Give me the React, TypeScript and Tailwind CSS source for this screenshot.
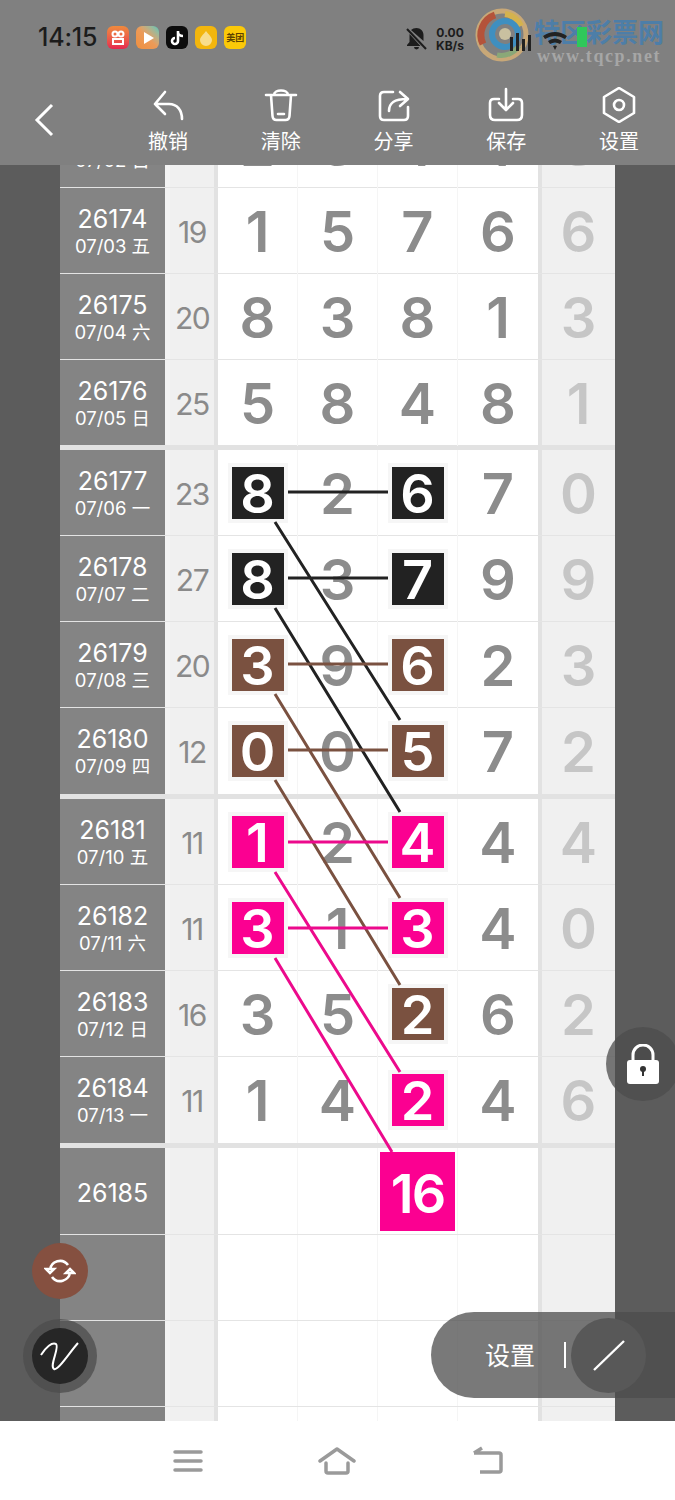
const FONT = "font-['Inter','Noto_Sans_CJK_SC',sans-serif]";

type Tone = "black" | "brown" | "pink";
type Row = {
  id: string;
  date?: string;
  sum?: string;
  nums?: string[];
  last?: string;
  marks?: Record<number, Tone>;
};

const toneClass: Record<Tone, string> = {
  black: "bg-[#222222]",
  brown: "bg-[#7a5140]",
  pink: "bg-[#fb0091]",
};

const groups: Row[][] = [
  [
    { id: "26173", date: "07/02 日", sum: "15", nums: ["2", "3", "1", "1"], last: "3" },
    { id: "26174", date: "07/03 五", sum: "19", nums: ["1", "5", "7", "6"], last: "6" },
    { id: "26175", date: "07/04 六", sum: "20", nums: ["8", "3", "8", "1"], last: "3" },
    { id: "26176", date: "07/05 日", sum: "25", nums: ["5", "8", "4", "8"], last: "1" },
  ],
  [
    { id: "26177", date: "07/06 一", sum: "23", nums: ["8", "2", "6", "7"], last: "0", marks: { 0: "black", 2: "black" } },
    { id: "26178", date: "07/07 二", sum: "27", nums: ["8", "3", "7", "9"], last: "9", marks: { 0: "black", 2: "black" } },
    { id: "26179", date: "07/08 三", sum: "20", nums: ["3", "9", "6", "2"], last: "3", marks: { 0: "brown", 2: "brown" } },
    { id: "26180", date: "07/09 四", sum: "12", nums: ["0", "0", "5", "7"], last: "2", marks: { 0: "brown", 2: "brown" } },
  ],
  [
    { id: "26181", date: "07/10 五", sum: "11", nums: ["1", "2", "4", "4"], last: "4", marks: { 0: "pink", 2: "pink" } },
    { id: "26182", date: "07/11 六", sum: "11", nums: ["3", "1", "3", "4"], last: "0", marks: { 0: "pink", 2: "pink" } },
    { id: "26183", date: "07/12 日", sum: "16", nums: ["3", "5", "2", "6"], last: "2", marks: { 2: "brown" } },
    { id: "26184", date: "07/13 一", sum: "11", nums: ["1", "4", "2", "4"], last: "6", marks: { 2: "pink" } },
  ],
];

function TableRow({ row, thick, height }: { row: Row; thick?: boolean; height: string }) {
  return (
    <div className={`flex ${height} ${thick ? "border-b-[5px] border-[#e2e2e2]" : "border-b border-[#e4e4e4]"}`}>
      <div className={`flex w-[105px] shrink-0 flex-col items-center justify-center bg-[#848484] text-white ${row.date ? "" : "pt-[3px]"}`}>
        <span className="text-[25px] leading-[30px]">{row.id}</span>
        {row.date && <span className="text-[18.5px] leading-[24px]">{row.date}</span>}
      </div>
      <div className="w-[5px] shrink-0 bg-[#f4f4f4]" />
      <div className="flex w-[44px] shrink-0 items-center justify-center bg-[#f0f0f0] pt-[3px] text-[30px] tracking-[-1.5px] text-[#8a8a8a]">
        {row.sum}
      </div>
      <div className="w-[4px] shrink-0 bg-[#e2e2e2]" />
      <div className="grid w-[320px] shrink-0 grid-cols-4 bg-white">
        {[0, 1, 2, 3].map((i) => {
          const tone = row.marks?.[i];
          return (
            <div key={i} className="flex items-center justify-center border-r border-[#f5f5f5] last:border-r-0">
              {row.nums &&
                (tone ? (
                  <div className={`z-10 flex h-[52px] w-[52px] items-center justify-center text-[54px] font-semibold text-white shadow-[0_0_0_4px_#f6f6f6] ${toneClass[tone]}`}>
                    {row.nums[i]}
                  </div>
                ) : (
                  <span className="pt-[2px] text-[56px] font-semibold text-[#8c8c8c]">{row.nums[i]}</span>
                ))}
            </div>
          );
        })}
      </div>
      <div className="w-[4px] shrink-0 bg-[#e2e2e2]" />
      <div className="flex w-[73px] shrink-0 items-center justify-center bg-[#f0f0f0] pt-[2px] text-[56px] font-semibold text-[#c6c6c6]">
        {row.last}
      </div>
    </div>
  );
}

// coordinates are relative to the table: page x - 60, page y - 102
function Lines() {
  return (
    <svg className="pointer-events-none absolute left-0 top-0 z-20" width="555" height="1256" fill="none" strokeWidth="3">
      <path d="M228 390H328M228 476H328M215 420L340 618M215 506L340 710" stroke="#222222" />
      <path d="M228 562H328M228 648H328M215 592L340 796M215 678L340 883" stroke="#7a5140" />
      <path d="M228 740H328M228 826H328M215 770L340 970M215 856L332 1050" stroke="#ec0a8c" />
    </svg>
  );
}

const tools = [
  { label: "撤销", d: "M5 17L15 5M5 17l10 10M5 17h14c8 0 13 6 13 15" },
  { label: "清除", d: "M3 8h30M11 8c0-6 14-6 14 0M8 8l1.5 21q.3 4 4 4h9q3.7 0 4-4L28 8M15 27h6" },
  { label: "分享", d: "M17 5H8q-4 0-4 4v20q0 4 4 4h20q4 0 4-4v-9M13 24c0-8 5-12 18-12M24 5l8 7-8 7" },
  { label: "保存", d: "M11 12H6q-4 0-4 4v12q0 5 5 5h22q5 0 5-5V16q0-4-4-4h-5M18 2v20M11 16l7 7 7-7" },
  { label: "设置", d: "M18 1l15 9v16l-15 9-15-9V10zM18 13a5 5 0 1 0 0 10 5 5 0 0 0 0-10z" },
];

function AppIcons() {
  return (
    <div className="ml-[10px] flex gap-[7px]">
      <div className="flex h-[23px] w-[22px] items-center justify-center rounded-[6px] bg-gradient-to-b from-[#ef8a3c] to-[#e5254f]">
        <svg width="14" height="16" viewBox="0 0 14 16" fill="none" stroke="white" strokeWidth="2">
          <circle cx="4" cy="4" r="2.5" />
          <circle cx="10" cy="4" r="2.5" />
          <path d="M2 9h10v5H2z" />
        </svg>
      </div>
      <div className="flex h-[23px] w-[23px] items-center justify-center rounded-[6px] bg-gradient-to-tr from-[#ee8f3e] via-[#ec9a58] to-[#45c5bb]">
        <svg width="14" height="14" viewBox="0 0 14 14" fill="white">
          <path d="M3 1l10 6-10 6z" />
        </svg>
      </div>
      <div className="flex h-[23px] w-[22px] items-center justify-center rounded-[6px] bg-[#0c0c0c]">
        <svg width="14" height="16" viewBox="0 0 14 16" fill="none" stroke="white" strokeWidth="2.6">
          <path d="M8 1v10a3 3 0 1 1-3-3M8 2c0 2 2 4 5 4" />
        </svg>
      </div>
      <div className="flex h-[23px] w-[22px] items-center justify-center rounded-[6px] bg-[#f3b60d]">
        <svg width="14" height="16" viewBox="0 0 14 16" fill="#f8dd8c">
          <path d="M7 1c3 4 6 6 6 9a6 6 0 0 1-12 0c0-3 3-5 6-9z" />
        </svg>
      </div>
      <div className="flex h-[23px] w-[22px] items-center justify-center rounded-[6px] bg-[#fbc908] text-[9px] font-bold text-[#5d4300]">
        美团
      </div>
    </div>
  );
}

function Watermark() {
  return (
    <div className="absolute left-[475px] top-[8px] flex items-start">
      <svg width="54" height="54" viewBox="0 0 54 54" fill="none">
        <circle cx="27" cy="27" r="24" stroke="#c8a878" strokeWidth="5" />
        <path d="M8 36A21 21 0 0 1 20 7" stroke="#b4533a" strokeWidth="7" />
        <path d="M46 18A21 21 0 0 0 30 6" stroke="#d4b24e" strokeWidth="6" />
        <path d="M44 38A21 21 0 0 1 22 47" stroke="#8aa878" strokeWidth="5" />
        <circle cx="30" cy="26" r="13" stroke="#3f8fc0" strokeWidth="6" />
        <circle cx="30" cy="26" r="6" fill="#c9c0a0" />
      </svg>
      <div className="ml-[5px] flex flex-col items-center">
        <span className="pt-[9px] text-[26px] font-bold leading-[32px] text-[#4d7ea8]">特区彩票网</span>
        <span className="mt-[-1px] whitespace-nowrap font-['Liberation_Serif',serif] text-[18px] font-bold leading-[16px] tracking-[1.6px] text-[#a6a6a6]">www.tqcp.net</span>
      </div>
      <svg className="absolute left-[35px] top-[19px]" width="80" height="28" viewBox="0 0 80 28" fill="#222222">
        <path d="M0 10h3v14H0zM6 6h3v18H6zM12 12h3v12h-3zM18 8h3v16h-3z" />
        <path d="M33 9q12-8 24 0l-2 3q-10-6-20 0zM38 14q7-5 14 0l-2 3q-5-3-10 0zM43 19q2-1 4 0l-2 4z" />
        <rect x="67" y="0" width="10" height="20" fill="#2fc85a" />
      </svg>
    </div>
  );
}

export default function App() {
  return (
    <div className={`relative flex h-[1500px] w-[675px] flex-col overflow-hidden bg-white ${FONT}`}>
      <header className="relative z-30 h-[165px] shrink-0 bg-[#808080]">
        <div className="flex h-[75px] items-center pl-[38px]">
          <span className="text-[25px] font-medium tracking-[-0.2px] text-[#1c1c1c]">14:15</span>
          <AppIcons />
        </div>
        <div className="absolute left-[405px] top-[26px] flex items-center gap-[8px]">
          <svg width="23" height="24" viewBox="0 0 23 24" fill="#1c1c1c">
            <path d="M11.5 1c4 0 7 3 7 7v6L6 3q2-2 5.500-2zM4.500 7l11 12H2v-1l2.500-3zM9 20h5a2.500 2.500 0 0 1-5 0z" />
            <path d="M2 2l19 20" stroke="#1c1c1c" strokeWidth="2" />
          </svg>
          <div className="flex flex-col items-center text-[12px] font-bold leading-[13px] text-[#1c1c1c]">
            <span>0.00</span>
            <span>KB/s</span>
          </div>
        </div>
        <Watermark />
        <div className="flex items-start">
          <svg className="ml-[32px] mt-[27px]" width="24" height="36" viewBox="0 0 24 36" fill="none" stroke="white" strokeWidth="3">
            <path d="M20 3L5 18l15 15" />
          </svg>
          <div className="ml-[93px] mt-[12px] flex gap-[74.750px]">
            {tools.map((t) => (
              <div key={t.label} className="flex w-[38px] flex-col items-center">
                <svg width="36" height="36" viewBox="0 0 36 36" fill="none" stroke="white" strokeWidth="2.6" strokeLinejoin="round" strokeLinecap="round">
                  <path d={t.d} />
                </svg>
                <span className="mt-[6px] whitespace-nowrap text-[20px] leading-[26px] text-white">{t.label}</span>
              </div>
            ))}
          </div>
        </div>
      </header>

      <main className="relative flex h-[1256px] shrink-0 overflow-hidden bg-[#5c5c5c]">
        <div className="w-[60px] shrink-0" />
        <div className="relative mt-[-63px] w-[555px] shrink-0">
          {groups.map((group, g) =>
            group.map((row, i) => {
              const thick = i === group.length - 1;
              const height = !thick ? "h-[86px]" : g === 0 ? "h-[90px]" : "h-[91px]";
              return <TableRow key={row.id} row={row} thick={thick} height={height} />;
            }),
          )}
          <TableRow row={{ id: "26185" }} height="h-[87px]" />
          <TableRow row={{ id: "" }} height="h-[86px]" />
          <TableRow row={{ id: "" }} height="h-[86px]" />
          <TableRow row={{ id: "" }} height="h-[86px]" />
          <Lines />
          <div className="absolute left-[320px] top-[1050px] z-30 flex h-[79px] w-[75px] items-center justify-center bg-[#fb0091] pt-[3px] text-[54px] font-semibold tracking-[-2px] text-white">
            16
          </div>
        </div>
        <div className="w-[60px] shrink-0" />
      </main>

      <nav className="flex h-[79px] shrink-0 items-center pl-[172px]">
        <svg width="32" height="24" viewBox="0 0 32 24" stroke="#9a9a9a" strokeWidth="3.5" strokeLinecap="round">
          <path d="M3 3h26M3 12h26M3 21h26" />
        </svg>
        <svg className="ml-[114px]" width="38" height="30" viewBox="0 0 38 30" fill="none" stroke="#9a9a9a" strokeWidth="3.5" strokeLinecap="round" strokeLinejoin="round">
          <path d="M2 15L19 3l17 12M8 17v8q0 2 2 2h18q2 0 2-2v-8" />
        </svg>
        <svg className="ml-[115px]" width="34" height="30" viewBox="0 0 34 30" fill="none" stroke="#9a9a9a" strokeWidth="3.5" strokeLinejoin="round">
          <path d="M3 7h25q2 0 2 2v15q0 2-2 2H9M11 2L3 7" />
        </svg>
      </nav>

      <button className="absolute left-[32px] top-[1243px] z-40 flex h-[56px] w-[56px] items-center justify-center rounded-full bg-[#855040]">
        <svg width="32" height="32" viewBox="0 0 32 32" fill="none" stroke="white" strokeWidth="2.6">
          <path d="M6 15a10 10 0 0 1 18-5M26 17a10 10 0 0 1-18 5M2 14h8l-4 4zM30 18h-8l4-4z" />
        </svg>
      </button>
      <div className="absolute left-[23px] top-[1319px] z-40 flex h-[74px] w-[74px] items-center justify-center rounded-full bg-[#4c4c4c]/75">
        <div className="flex h-[56px] w-[56px] items-center justify-center rounded-full bg-[#262626]">
          <svg width="44" height="36" viewBox="0 0 44 36" fill="none" stroke="white" strokeWidth="2">
            <path d="M3 17C8 9 14 4 18 6c4 3-7 22-2 25 4 2 15-16 24-26" />
          </svg>
        </div>
      </div>
      <div className="absolute left-[606px] top-[1027px] z-40 flex h-[74px] w-[74px] items-center justify-center rounded-full bg-[#4c4c4c]/75">
        <svg width="34" height="40" viewBox="0 0 34 40">
          <path d="M7 18v-7a10 10 0 0 1 20 0v7" fill="#4c4c4c" stroke="white" strokeWidth="3" />
          <rect x="1" y="16" width="32" height="24" rx="3" fill="white" />
          <circle cx="17" cy="25" r="3" fill="#333" />
          <path d="M16 26h2v6h-2z" fill="#333" />
        </svg>
      </div>
      <div className="absolute left-[431px] top-[1312px] z-40 flex h-[86px] w-[244px] items-center rounded-l-[43px] bg-[#4c4c4c]/75 pl-[54px]">
        <span className="pt-[4px] text-[25px] text-white">设置</span>
        <div className="ml-[29px] h-[26px] w-[2px] bg-white" />
        <div className="ml-[5px] flex h-[75px] w-[75px] items-center justify-center rounded-full bg-[#585858]">
          <svg width="34" height="34" viewBox="0 0 34 34" stroke="white" strokeWidth="2.4">
            <path d="M2 32L32 3" />
          </svg>
        </div>
      </div>
    </div>
  );
}
